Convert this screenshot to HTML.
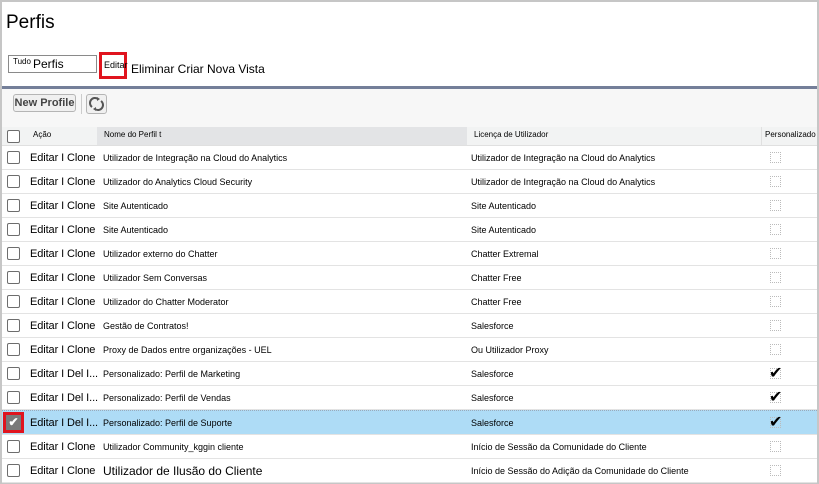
<!DOCTYPE html>
<html><head><meta charset="utf-8"><style>
*{margin:0;padding:0;box-sizing:border-box}
body{width:819px;height:484px;background:#fff;font-family:"Liberation Sans",Arial,sans-serif;position:relative;overflow:hidden;color:#000}
.frame{position:absolute;left:0;top:0;width:819px;height:484px;border:2px solid #c6c6c6}
.abs{position:absolute}
h1{position:absolute;left:6px;top:12px;font-size:19px;font-weight:normal}
.sel{position:absolute;left:8px;top:55px;width:89px;height:18px;border:1px solid #8a8a8a;font-size:12px;padding-left:24px;line-height:17px}
.sel span{position:absolute;left:4px;top:-3px;font-size:8px}
.editar{position:absolute;left:99px;top:52px;width:28px;height:27px;border:3px solid #e0141e;font-size:9px;line-height:20px;padding-left:2px}
.links{position:absolute;left:131px;top:62px;font-size:12px}
.bar{position:absolute;left:2px;top:86px;width:815px;height:3px;background:#747f99}
.tb{position:absolute;left:2px;top:89px;width:815px;height:38px;background:#f7f7f7}
.btn{position:absolute;left:13px;top:94px;width:63px;height:18px;border:1px solid #b5b5b5;border-radius:3px;background:#f0f0f0;font-size:11px;font-weight:bold;color:#444;text-align:center;line-height:16px}
.rbtn{position:absolute;left:86px;top:94px;width:21px;height:20px;border:1px solid #b5b5b5;border-radius:3px;background:#f0f0f0}
.hdr{position:absolute;top:127px;height:19px;font-size:8px;line-height:15px;border-bottom:1px solid #e0e0e0}
.row{position:absolute;left:2px;width:815px;height:24px;border-bottom:1px solid #e3e3e3;font-size:9px}
.row .cb{position:absolute;left:5px;top:5px;width:13px;height:13px;border:1px solid #6d6d6d;border-radius:2px;background:#fff}
.row .act{position:absolute;left:28px;top:6px;font-size:11px;letter-spacing:-0.1px}
.row .nm{position:absolute;left:101px;top:7px}
.row .lic{position:absolute;left:469px;top:7px}
.row .pc{position:absolute;left:768px;top:6px;width:11px;height:11px;border:1px dotted #bbb}
.row .ck{position:absolute;left:767px;top:1px;font-size:16px}
.hcb{position:absolute;left:7px;top:130px;width:13px;height:13px;border:1px solid #6d6d6d;border-radius:2px;background:#fff}
</style></head><body>
<div class="frame"></div>
<h1>Perfis</h1>
<div class="sel"><span>Tudo</span>Perfis</div>
<div class="editar">Editar</div>
<div class="links">Eliminar Criar Nova Vista</div>
<div class="bar"></div>
<div class="tb"></div>
<div class="btn">New Profile</div>
<div class="rbtn"><svg width="19" height="18" viewBox="0 0 19 18"><path d="M5 12a5 5 0 0 1 6-8" stroke="#555" stroke-width="2" fill="none"/><path d="M14 6a5 5 0 0 1-6 8" stroke="#555" stroke-width="2" fill="none"/><path d="M10 2l3 2-3 2z M9 16l-3-2 3-2z" fill="#555"/></svg></div>
<div class="abs" style="left:81px;top:94px;width:1px;height:20px;background:#ccc"></div>
<div class="hdr" style="left:2px;width:24px;background:#f2f3f3"></div>
<div class="hcb"></div>
<div class="hdr" style="left:26px;width:71px;background:#f2f3f3;padding-left:7px">Ação</div>
<div class="hdr" style="left:97px;width:370px;background:#e3e4e6;padding-left:7px">Nome do Perfil t</div>
<div class="hdr" style="left:467px;width:294px;background:#f2f3f3;padding-left:7px">Licença de Utilizador</div>
<div class="hdr" style="left:761px;width:56px;background:#f2f3f3;border-left:1px solid #e0e0e0;padding-left:3px">Personalizado</div>

<div class="row" style="top:146px"><div class="cb"></div><div class="act">Editar I Clone</div><div class="nm">Utilizador de Integração na Cloud do Analytics</div><div class="lic">Utilizador de Integração na Cloud do Analytics</div><div class="pc"></div></div>
<div class="row" style="top:170px"><div class="cb"></div><div class="act">Editar I Clone</div><div class="nm">Utilizador do Analytics Cloud Security</div><div class="lic">Utilizador de Integração na Cloud do Analytics</div><div class="pc"></div></div>
<div class="row" style="top:194px"><div class="cb"></div><div class="act">Editar I Clone</div><div class="nm">Site Autenticado</div><div class="lic">Site Autenticado</div><div class="pc"></div></div>
<div class="row" style="top:218px"><div class="cb"></div><div class="act">Editar I Clone</div><div class="nm">Site Autenticado</div><div class="lic">Site Autenticado</div><div class="pc"></div></div>
<div class="row" style="top:242px"><div class="cb"></div><div class="act">Editar I Clone</div><div class="nm">Utilizador externo do Chatter</div><div class="lic">Chatter Extremal</div><div class="pc"></div></div>
<div class="row" style="top:266px"><div class="cb"></div><div class="act">Editar I Clone</div><div class="nm">Utilizador Sem Conversas</div><div class="lic">Chatter Free</div><div class="pc"></div></div>
<div class="row" style="top:290px"><div class="cb"></div><div class="act">Editar I Clone</div><div class="nm">Utilizador do Chatter Moderator</div><div class="lic">Chatter Free</div><div class="pc"></div></div>
<div class="row" style="top:314px"><div class="cb"></div><div class="act">Editar I Clone</div><div class="nm">Gestão de Contratos!</div><div class="lic">Salesforce</div><div class="pc"></div></div>
<div class="row" style="top:338px"><div class="cb"></div><div class="act">Editar I Clone</div><div class="nm">Proxy de Dados entre organizações - UEL</div><div class="lic">Ou Utilizador Proxy</div><div class="pc"></div></div>
<div class="row" style="top:362px"><div class="cb"></div><div class="act">Editar I Del I...</div><div class="nm">Personalizado: Perfil de Marketing</div><div class="lic">Salesforce</div><div class="pc"></div><div class="ck">✔</div></div>
<div class="row" style="top:386px"><div class="cb"></div><div class="act">Editar I Del I...</div><div class="nm">Personalizado: Perfil de Vendas</div><div class="lic">Salesforce</div><div class="pc"></div><div class="ck">✔</div></div>
<div class="row" style="top:410px;background:#aedcf6;border-top:1px dotted #9ab;height:25px"><div class="cb" style="left:1px;top:1px;width:21px;height:21px;border:3px solid #e0141e;background:#7a7a7a;border-radius:0;color:#fff;font-size:12px;text-align:center;line-height:15px;font-weight:bold">✔</div><div class="act">Editar I Del I...</div><div class="nm">Personalizado: Perfil de Suporte</div><div class="lic">Salesforce</div><div class="pc"></div><div class="ck">✔</div></div>
<div class="row" style="top:435px"><div class="cb"></div><div class="act">Editar I Clone</div><div class="nm">Utilizador Community_kggin cliente</div><div class="lic">Início de Sessão da Comunidade do Cliente</div><div class="pc"></div></div>
<div class="row" style="top:459px"><div class="cb"></div><div class="act">Editar I Clone</div><div class="nm" style="font-size:12px;top:5px">Utilizador de Ilusão do Cliente</div><div class="lic">Início de Sessão do Adição da Comunidade do Cliente</div><div class="pc"></div></div>
</body></html>
